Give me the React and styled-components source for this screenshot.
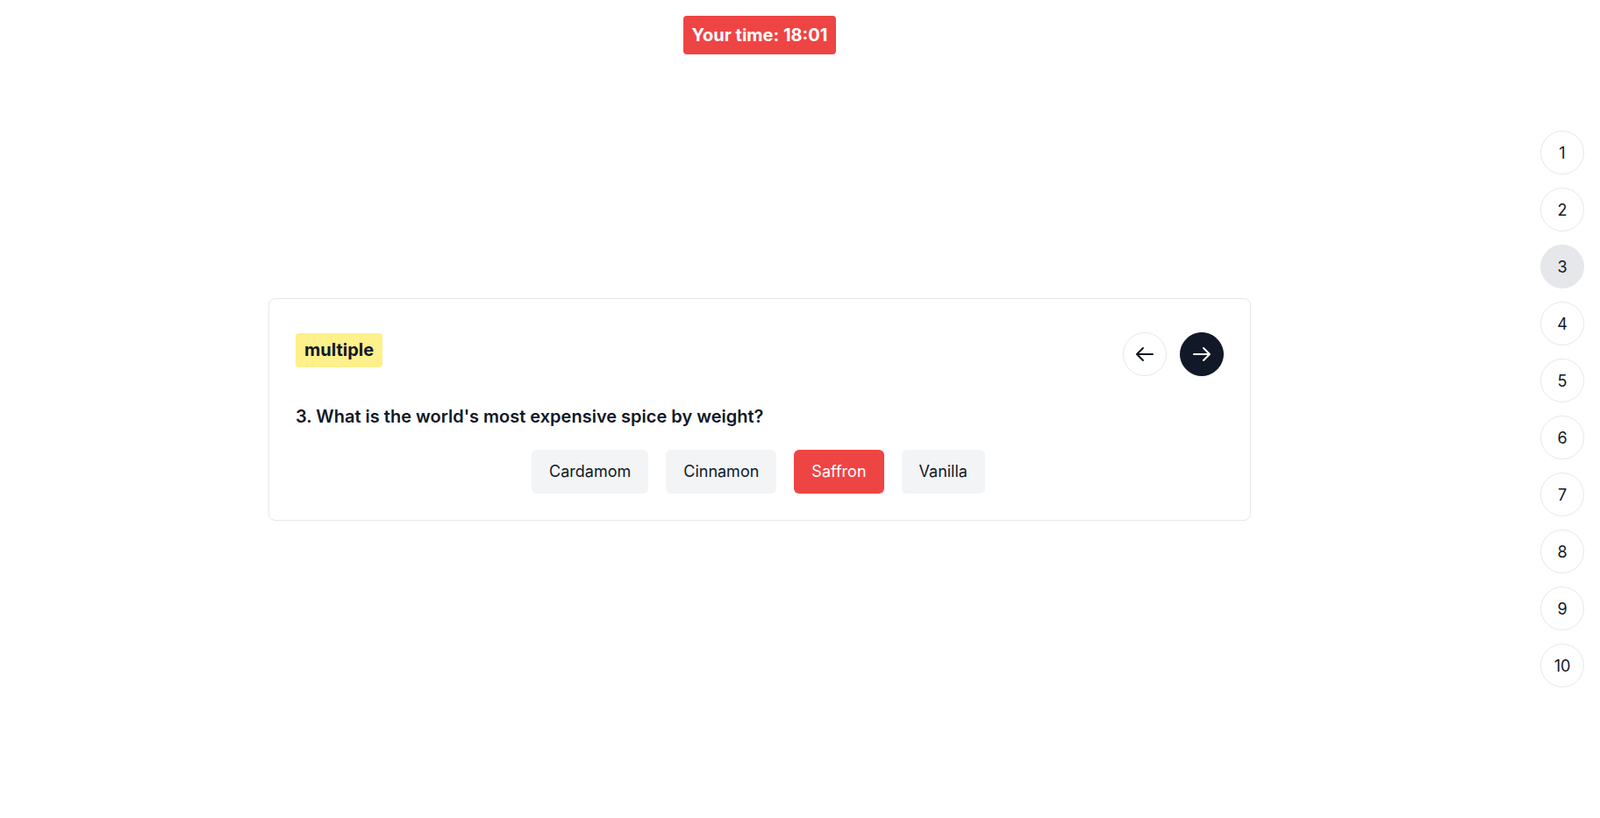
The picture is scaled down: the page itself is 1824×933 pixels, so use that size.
import React from "react";
import styled, { createGlobalStyle } from "styled-components";
import { HiOutlineArrowLeft, HiOutlineArrowRight } from "react-icons/hi";

const GlobalStyle = createGlobalStyle`
  * { box-sizing: border-box; }
  body {
    margin: 0;
    font-family: Inter, "Noto Sans", sans-serif;
    color: #111827;
    background: #fff;
  }
`;

const Page = styled.div`
  display: flex;
  height: 100vh;
`;

const Main = styled.main`
  flex: 1;
  display: grid;
  grid-template-rows: 1fr auto 1fr;
  justify-items: center;
`;

const Timer = styled.div`
  align-self: start;
  margin-top: 18px;
  padding: 8px 10px;
  background: #ef4444;
  color: #fff;
  font-size: 20px;
  font-weight: 700;
  line-height: 28px;
  border-radius: 4px;
`;

const Card = styled.section`
  width: 1120px;
  border: 1px solid #e5e7eb;
  border-radius: 8px;
  padding: 38px 30px 30px 30px;
`;

const Header = styled.div`
  display: flex;
  justify-content: space-between;
  align-items: flex-start;
`;

const Badge = styled.span`
  margin-top: 1px;
  background: #fef08a;
  border-radius: 4px;
  padding: 6px 10px;
  font-size: 20px;
  line-height: 27px;
  font-weight: 700;
`;

const NavGroup = styled.div`
  display: flex;
  gap: 15px;
`;

const NavButton = styled.button`
  width: 50px;
  height: 50px;
  border-radius: 50%;
  display: flex;
  align-items: center;
  justify-content: center;
  border: 1px solid ${(p) => (p.$dark ? "#111827" : "#e5e7eb")};
  background: ${(p) => (p.$dark ? "#111827" : "#fff")};
  color: ${(p) => (p.$dark ? "#fff" : "#111827")};
  padding: 0;
  cursor: pointer;
`;

const Question = styled.h2`
  margin: 32px 0 0;
  font-size: 20px;
  line-height: 28px;
  font-weight: 600;
`;

const Options = styled.div`
  display: flex;
  justify-content: center;
  gap: 20px;
  margin-top: 24px;
  padding-right: 3px;
`;

const Option = styled.button`
  height: 50px;
  padding: 0 20px;
  border: none;
  border-radius: 6px;
  font-family: inherit;
  font-size: 18px;
  background: ${(p) => (p.$selected ? "#ef4444" : "#f3f4f6")};
  color: ${(p) => (p.$selected ? "#fff" : "#111827")};
  cursor: pointer;
`;

const Sidebar = styled.nav`
  width: 92px;
  padding-left: 6px;
  display: flex;
  flex-direction: column;
  justify-content: center;
  align-items: center;
  gap: 15px;
`;

const Step = styled.button`
  width: 50px;
  height: 50px;
  border-radius: 50%;
  border: 1px solid #e5e7eb;
  background: ${(p) => (p.$active ? "#e5e7eb" : "#fff")};
  color: #111827;
  font-family: inherit;
  font-size: 18px;
  padding: 0;
  cursor: pointer;
`;

const options = ["Cardamom", "Cinnamon", "Saffron", "Vanilla"];

export default function App() {
  return (
    <Page>
      <GlobalStyle />
      <Main>
        <Timer>Your time: 18:01</Timer>
        <Card>
          <Header>
            <Badge>multiple</Badge>
            <NavGroup>
              <NavButton>
                <HiOutlineArrowLeft size={24} />
              </NavButton>
              <NavButton $dark>
                <HiOutlineArrowRight size={24} />
              </NavButton>
            </NavGroup>
          </Header>
          <Question>3. What is the world's most expensive spice by weight?</Question>
          <Options>
            {options.map((o) => (
              <Option key={o} $selected={o === "Saffron"}>
                {o}
              </Option>
            ))}
          </Options>
        </Card>
      </Main>
      <Sidebar>
        {Array.from({ length: 10 }, (_, i) => (
          <Step key={i} $active={i === 2}>
            {i + 1}
          </Step>
        ))}
      </Sidebar>
    </Page>
  );
}
